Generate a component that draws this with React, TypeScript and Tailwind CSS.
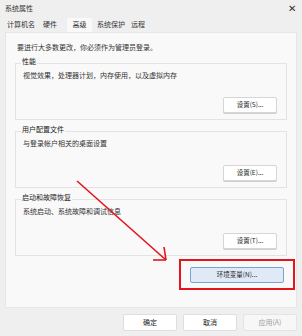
const font = { fontFamily: '"Noto Sans CJK SC", "Liberation Sans", sans-serif' };

function Group({ title, desc, btn }: { title: string; desc: string; btn: string }) {
  return (
    <div className="relative mx-[9px] mt-[11px] h-[57px] border border-[#e3e3e3] bg-[#f9f9f9]">
      <div className="absolute -top-[8px] left-[5px] bg-[#f9f9f9] px-[1px] text-[7px] leading-[10px] text-[#222]">
        {title}
      </div>
      <div className="pl-[7px] pt-[6px] text-[7px] leading-[10px] text-[#333]">{desc}</div>
      <div className="absolute bottom-[6px] right-[9px]">
        <button className="h-[16px] w-[54px] rounded-[2px] border border-[#d6d6d6] bg-white text-[6.5px] text-[#222] shadow-[0_1px_0_#cfcfcf]">
          {btn}
        </button>
      </div>
    </div>
  );
}

export default function App() {
  return (
    <div className="relative h-[336px] w-[302px] overflow-hidden bg-[#efefef]" style={font}>
      <div className="flex h-[16px] items-center justify-between pl-[5px] pr-[6px]">
        <span className="text-[7px] text-[#333]">系统属性</span>
        <span className="text-[10px] leading-none text-[#333]">✕</span>
      </div>
      <div className="flex h-[16px] items-end pl-[5px] text-[7px] text-[#333]">
        <div className="px-[2px] pb-[3px]">计算机名</div>
        <div className="px-[6px] pb-[3px]">硬件</div>
        <div className="ml-[4px] h-[14px] w-[25px] bg-[#f9f9f9] pt-[1px] text-center">高级</div>
        <div className="px-[5px] pb-[3px]">系统保护</div>
        <div className="px-[1px] pb-[3px]">远程</div>
      </div>
      <div className="mx-[5px] h-[276px] border border-[#e6e6e6] bg-[#f9f9f9]">
        <div className="pl-[11px] pt-[9px] text-[7px] leading-[10px] text-[#333]">
          要进行大多数更改，你必须作为管理员登录。
        </div>
        <div className="mt-[5px]" />
        <Group title="性能" desc="视觉效果，处理器计划，内存使用，以及虚拟内存" btn="设置(S)..." />
        <Group title="用户配置文件" desc="与登录帐户相关的桌面设置" btn="设置(E)..." />
        <Group title="启动和故障恢复" desc="系统启动、系统故障和调试信息" btn="设置(T)..." />
        <div className="mt-[3px] flex justify-end pr-[1px]">
          <div className="flex h-[31px] w-[116px] items-center justify-center border-2 border-[#e5131d]">
            <button className="h-[16px] w-[94px] rounded-[2px] border border-[#7aa3d4] bg-[#dfeaf6] text-[6.5px] text-[#222]">
              环境变量(N)...
            </button>
          </div>
        </div>
      </div>
      <div className="mt-[6px] flex justify-end gap-[6px] pr-[5px]">
        <button className="h-[17px] w-[54px] rounded-[2px] border border-[#dedede] bg-white text-[7px] text-[#222]">确定</button>
        <button className="h-[17px] w-[54px] rounded-[2px] border border-[#dedede] bg-white text-[7px] text-[#222]">取消</button>
        <button className="h-[17px] w-[54px] rounded-[2px] border border-[#e4e4e4] bg-[#f7f7f7] text-[7px] text-[#a0a0a0]">应用(A)</button>
      </div>
      <svg className="pointer-events-none absolute left-0 top-0" width="302" height="336">
        <line x1="77" y1="181" x2="166" y2="260" stroke="#e5131d" strokeWidth="1.6" />
        <line x1="166" y1="260" x2="153" y2="260" stroke="#e5131d" strokeWidth="1.6" />
        <line x1="166" y1="260" x2="164" y2="247" stroke="#e5131d" strokeWidth="1.6" />
      </svg>
    </div>
  );
}
